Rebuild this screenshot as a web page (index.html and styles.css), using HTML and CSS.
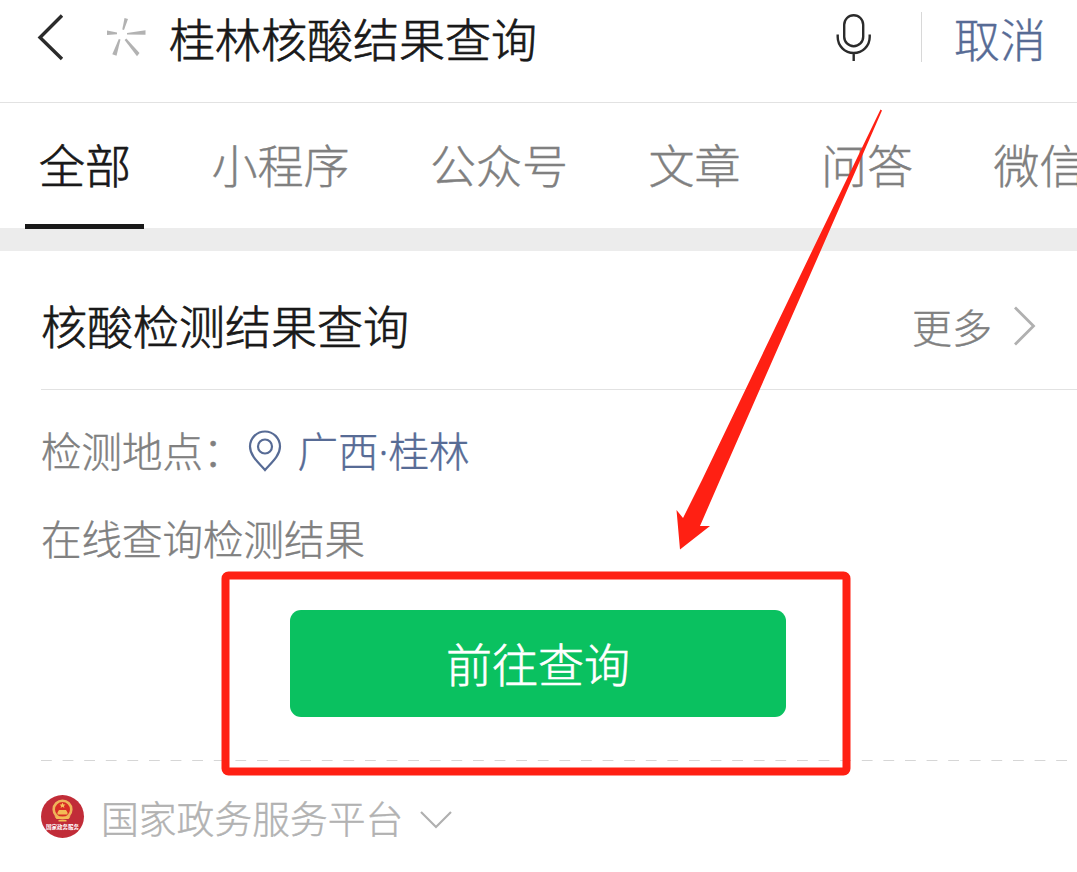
FILE: index.html
```html
<!DOCTYPE html>
<html lang="zh-CN">
<head>
  <meta charset="UTF-8">
  <title>桂林核酸结果查询</title>
  <link rel="stylesheet" href="styles.css">
</head>
<body>
  <div class="page">
    <header class="search-bar">
      <svg class="back-icon" width="28" height="50" viewBox="0 0 28 50">
        <path d="M26 3.500 L4 25.500 L26 47" fill="none" stroke="#2b2b2b" stroke-width="3.400"/>
      </svg>
      <svg class="search-logo" width="40" height="40" viewBox="0 0 40 40" fill="#b2b2b2">
        <path d="M18.500 0 L22 1 L18 12 L16.300 11.500 Z"/>
        <path d="M1 12.500 L11 14.500 L11 16.200 L1 17 Z"/>
        <path d="M39.500 12.300 L39.500 16.800 L21 16.500 L21 15 Z"/>
        <path d="M12.800 21 L14.500 21.500 L10.500 37.800 L6.300 36.300 Z"/>
        <path d="M18.600 22 L20.300 20.500 L33.500 35 L31 38.300 Z"/>
      </svg>
      <h1 class="search-text">桂林核酸结果查询</h1>
      <svg class="mic-icon" width="36" height="50" viewBox="0 0 36 50" fill="none" stroke="#2b2b2b" stroke-width="2.400">
        <rect x="8.200" y="3.200" width="19" height="31" rx="9.500"/>
        <path d="M1.700 22.500 V25 A16 16 0 0 0 33.700 25 V22.500 M17.700 41.500 V49"/>
      </svg>
      <span class="divider"></span>
      <a class="cancel">取消</a>
    </header>

    <nav class="tabs">
      <a class="tab active">全部</a>
      <a class="tab">小程序</a>
      <a class="tab">公众号</a>
      <a class="tab">文章</a>
      <a class="tab">问答</a>
      <a class="tab">微信</a>
    </nav>

    <main class="card">
      <div class="card-header">
        <h2 class="card-title">核酸检测结果查询</h2>
        <a class="more">更多
          <svg width="24" height="42" viewBox="0 0 24 42">
            <path d="M2 2.500 L20.500 21 L2 39.500" fill="none" stroke="#b0b0b0" stroke-width="2.800"/>
          </svg>
        </a>
      </div>

      <div class="place">
        <span>检测地点：</span>
        <a class="city">
          <svg class="pin" width="34" height="42" viewBox="0 0 34 42" fill="none" stroke="#576b95" stroke-width="2.200">
            <path d="M17 40 C11.500 33.500 2 26 2 16.500 A15 15 0 0 1 32 16.500 C32 26 22.500 33.500 17 40 Z"/>
            <circle cx="17" cy="16.500" r="7"/>
          </svg>
          <span>广西<span class="dot">·</span>桂林</span>
        </a>
      </div>

      <p class="desc">在线查询检测结果</p>
      <button class="query-btn">前往查询</button>

      <svg class="dash-line" width="1036" height="2">
        <line x1="0" y1=".5" x2="1036" y2=".5" stroke="#d6d6d6" stroke-width="1" stroke-dasharray="10.800 10.800"/>
      </svg>

      <footer class="source">
        <svg width="44" height="44" viewBox="0 0 44 44">
          <circle cx="21.500" cy="21.500" r="21.500" fill="#c12c38"/>
          <circle cx="21.500" cy="14.500" r="8.800" fill="#d82c25" stroke="#efb45a" stroke-width="2.600"/>
          <path d="M21.500 7.500 l.9 1.900 2.100.2-1.600 1.300.5 2-1.900-1.100-1.900 1.100.5-2-1.600-1.300 2.100-.2z" fill="#f8c55e"/>
          <path d="M16.500 17.500 L18 15 H25 L26.500 17.500 V19.500 H16.500 Z M13.500 21.500 H29.500 L27.500 24 H15.500 Z M17.500 25 H25.500 V26.500 H17.500 Z" fill="#f3bb55"/>
          <text class="logo-text" x="21.500" y="33.800" text-anchor="middle">国家政务服务</text>
        </svg>
        <span class="source-name">国家政务服务平台</span>
        <svg class="chevron-down" width="32" height="20" viewBox="0 0 32 20">
          <path d="M1 2 L16 17 L31 2" fill="none" stroke="#b0b0b0" stroke-width="2.200"/>
        </svg>
      </footer>
    </main>

    <!-- Marks over the page: arrow and frame -->
    <svg class="marks" width="1077" height="872" viewBox="0 0 1077 872">
      <path d="M880.500 109.500 L882 110.500 L821 250 L720 480 L700 526 L710 526 L680 549.500 L676.500 510 L683 518 L702 480 L812.500 250 Z" fill="#ff2013"/>
      <rect x="225.500" y="575.500" width="621" height="196" rx="3" fill="none" stroke="#ff2013" stroke-width="8"/>
    </svg>
  </div>
</body>
</html>
```
FILE: styles.css
```css
* {
  margin: 0;
  padding: 0;
  box-sizing: border-box;
}

body {
  background: #fff;
  font-family: "Noto Sans CJK SC", sans-serif;
  font-weight: 300;
  -webkit-text-stroke: 0.4px;
}

svg {
  display: block;
  flex-shrink: 0;
}

.page {
  position: relative;
  width: 1077px;
  height: 872px;
  overflow: hidden;
}

.search-bar {
  display: flex;
  align-items: flex-start;
  height: 103px;
  padding: 12px 31px 0 36px;
  border-bottom: 1px solid #e2e2e2;
}

.search-logo {
  margin: 6px 0 0 42px;
}

.search-text {
  flex: 1;
  margin-left: 23px;
  font-size: 46px;
  font-weight: 300;
  line-height: 50px;
  color: #191919;
  -webkit-text-stroke: 0.7px;
}

.mic-icon {
  margin-right: 49px;
}

.divider {
  width: 1px;
  height: 50px;
  background: #d8d8d8;
}

.cancel {
  margin-left: 32px;
  font-size: 46px;
  line-height: 50px;
  color: #576b95;
}

.tabs {
  display: flex;
  gap: 52.500px;
  height: 125px;
  padding-left: 25px;
}

.tab {
  flex-shrink: 0;
  padding: 0 14px;
  font-size: 46px;
  line-height: 120px;
  color: #808080;
}

.tab.active {
  position: relative;
  height: 126px;
  margin-right: 1px;
  padding-right: 13px;
  border-bottom: 5px solid #191919;
  color: #191919;
  -webkit-text-stroke: 0.7px;
}

.card {
  padding-left: 41px;
  border-top: 23px solid #ececec;
}

.card-header {
  display: flex;
  justify-content: space-between;
  align-items: center;
  height: 139px;
  padding-right: 40px;
  padding-top: 12px;
  border-bottom: 1px solid #e2e2e2;
}

.card-title {
  padding-bottom: 4px;
  font-size: 46px;
  font-weight: 300;
  color: #191919;
  -webkit-text-stroke: 0.7px;
}

.more {
  display: flex;
  align-items: center;
  gap: 21px;
  font-size: 40px;
  color: #808080;
}

.place {
  display: flex;
  align-items: center;
  height: 88px;
  margin-top: 15px;
  font-size: 40.500px;
  color: #808080;
}

.city {
  display: flex;
  align-items: center;
  gap: 16px;
  margin-left: 4px;
  color: #576b95;
}

.pin {
  margin-top: 4px;
}

.dot {
  font-family: "Noto Sans", sans-serif;
}

.desc {
  font-size: 40.500px;
  line-height: 90px;
  color: #808080;
}

.query-btn {
  display: block;
  width: 496px;
  height: 107px;
  margin: 27px 0 43px 249px;
  padding-bottom: 3px;
  border: 0;
  border-radius: 11px;
  background: #0ac160;
  font-family: inherit;
  font-size: 46px;
  font-weight: 300;
  color: #fff;
  -webkit-text-stroke: 0.6px;
}

.source {
  display: flex;
  align-items: center;
  height: 110px;
}

.source-name {
  margin: 0 17px 2px 16px;
  font-size: 37.800px;
  color: #b2b2b2;
}

.chevron-down {
  margin-top: 6px;
}

.logo-text {
  font-size: 5.500px;
  font-weight: 700;
  fill: #fff;
  -webkit-text-stroke: 0;
}

.marks {
  position: absolute;
  top: 0;
  left: 0;
}
```
